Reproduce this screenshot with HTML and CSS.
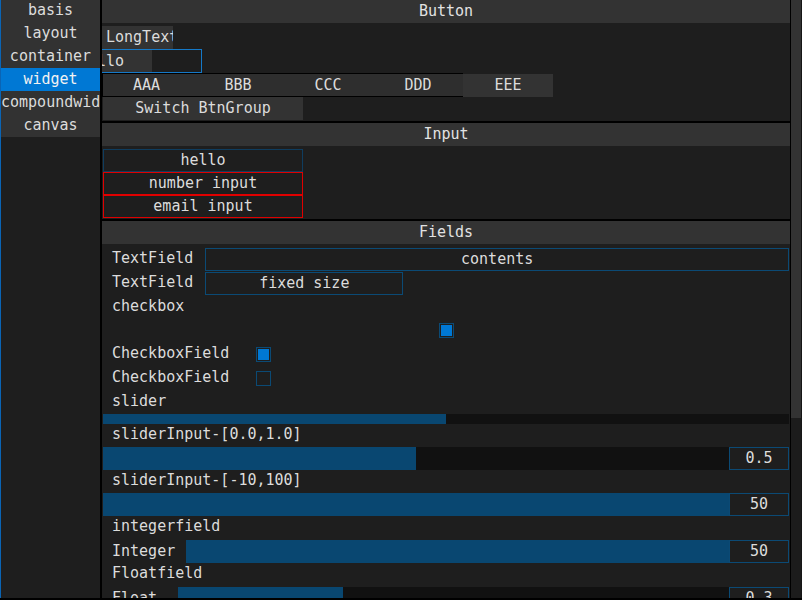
FILE: index.html
```html
<!DOCTYPE html>
<html>
<head>
<meta charset="utf-8">
<link rel="stylesheet" href="styles.css">
</head>
<body>
<div class="app">
  <div class="edge"></div>
  <nav class="sidebar">
    <div class="nav-item">basis</div>
    <div class="nav-item">layout</div>
    <div class="nav-item">container</div>
    <div class="nav-item active">widget</div>
    <div class="nav-item">compoundwidget</div>
    <div class="nav-item">canvas</div>
  </nav>
  <div class="divider"></div>
  <main class="main">
    <section class="section">
      <div class="sec-head">Button</div>
      <div class="sec-body">
        <div class="btn long">LongText</div>
        <div class="scroll-input"><div class="sel">hello</div></div>
        <div class="btn-group">
          <div class="gbtn first">AAA</div>
          <div class="gbtn">BBB</div>
          <div class="gbtn">CCC</div>
          <div class="gbtn">DDD</div>
          <div class="gbtn plain">EEE</div>
        </div>
        <div class="btn switch">Switch BtnGroup</div>
      </div>
    </section>
    <section class="section">
      <div class="sec-head">Input</div>
      <div class="sec-body">
        <div class="inp ok">hello</div>
        <div class="inp err">number input</div>
        <div class="inp err">email input</div>
      </div>
    </section>
    <section class="section grow">
      <div class="sec-head">Fields</div>
      <div class="fields">
        <div class="row h24">
          <span class="label">TextField</span>
          <div class="tfield wide">contents</div>
        </div>
        <div class="row h24">
          <span class="label">TextField</span>
          <div class="tfield fixed">fixed size</div>
        </div>
        <div class="row"><span class="label">checkbox</span></div>
        <div class="row h24 center">
          <div class="cbox on"><div class="mark"></div></div>
        </div>
        <div class="row h24">
          <span class="label">CheckboxField</span>
          <div class="cbox on field"><div class="mark"></div></div>
        </div>
        <div class="row h24">
          <span class="label">CheckboxField</span>
          <div class="cbox field"></div>
        </div>
        <div class="row"><span class="label">slider</span></div>
        <div class="slider-row">
          <div class="track"><div class="fill" style="width:50%"></div></div>
        </div>
        <div class="row"><span class="label">sliderInput-[0.0,1.0]</span></div>
        <div class="srow">
          <div class="track"><div class="fill" style="width:50%"></div></div>
          <div class="numbox">0.5</div>
        </div>
        <div class="row"><span class="label">sliderInput-[-10,100]</span></div>
        <div class="srow">
          <div class="track"><div class="fill" style="width:100%"></div></div>
          <div class="numbox">50</div>
        </div>
        <div class="row h24"><span class="label">integerfield</span></div>
        <div class="srow labeled">
          <span class="label">Integer</span>
          <div class="track int"><div class="fill" style="width:100%"></div></div>
          <div class="numbox">50</div>
        </div>
        <div class="row h24"><span class="label">Floatfield</span></div>
        <div class="srow labeled">
          <span class="label">Float</span>
          <div class="track flt"><div class="fill" style="width:30%"></div></div>
          <div class="numbox">0.3</div>
        </div>
      </div>
    </section>
  </main>
  <div class="vsep"></div>
  <div class="scrollbar"><div class="thumb"></div></div>
</div>
</body>
</html>
```
FILE: styles.css
```css
* { box-sizing: border-box; margin: 0; padding: 0; }
html, body {
  width: 802px;
  height: 600px;
  overflow: hidden;
  background: #000;
}
body {
  font-family: "DejaVu Sans Mono", "Liberation Mono", monospace;
  font-size: 15px;
  color: #dcdcdc;
}
.app {
  display: flex;
  height: 598px;
}
.edge { width: 1px; background: #0a64b4; flex-shrink: 0; }
.sidebar {
  width: 99px;
  flex-shrink: 0;
  background: #1e1e1e;
  display: flex;
  flex-direction: column;
  overflow: hidden;
}
.nav-item {
  height: 23px;
  line-height: 23px;
  background: #323232;
  text-align: center;
  white-space: nowrap;
  overflow: hidden;
  flex-shrink: 0;
}
.nav-item:first-child { margin-top: -1px; }
.nav-item.active { background: #0078d4; color: #f2f2f2; }
.divider { width: 2px; background: #000; flex-shrink: 0; }
.main {
  width: 688px;
  flex-shrink: 0;
  display: flex;
  flex-direction: column;
  gap: 2px;
  overflow: hidden;
  background: #000;
}
.section { background: #1e1e1e; flex-shrink: 0; }
.section.grow { flex: 1; }
.sec-head {
  height: 23px;
  line-height: 23px;
  background: #333;
  text-align: center;
  color: #e2e2e2;
}
.sec-body {
  padding: 3px 0 1px;
  display: flex;
  flex-direction: column;
  align-items: flex-start;
}
.btn {
  height: 23px;
  line-height: 23px;
  background: #333;
  white-space: nowrap;
  overflow: hidden;
}
.btn.long { width: 71px; padding-left: 4px; }
.btn.switch { margin-left: 1px; width: 200px; text-align: center; }
.scroll-input {
  width: 100px;
  height: 24px;
  border: 1px solid #1579c8;
  border-left: none;
  background: #1e1e1e;
}
.sel {
  width: 50px;
  height: 22px;
  line-height: 22px;
  background: #333;
  overflow: hidden;
  white-space: nowrap;
  text-indent: -23px;
}
.btn-group { display: flex; height: 24px; }
.gbtn {
  width: 90px;
  height: 24px;
  line-height: 22px;
  border-top: 1px solid #000;
  border-bottom: 1px solid #000;
  background: #2e2e2e;
  text-align: center;
}
.gbtn.first { width: 91px; border-left: 1px solid #000; text-indent: -3px; }
.gbtn.plain {
  border: none;
  margin-top: 1px;
  height: 23px;
  line-height: 23px;
  background: #333;
}
.inp {
  margin-left: 1px;
  width: 200px;
  height: 23px;
  line-height: 21px;
  border: 1px solid;
  text-align: center;
}
.inp.ok { border-color: #0f3d5f; }
.inp.err { border-color: #e00000; }
.fields {
  padding-top: 4px;
  display: flex;
  flex-direction: column;
}
.row {
  display: flex;
  align-items: flex-start;
  height: 23px;
  padding-left: 10px;
  padding-right: 1px;
}
.row.h24 { height: 24px; }
.row.center { justify-content: center; padding: 0; }
.label { line-height: 21px; white-space: nowrap; }
.tfield {
  height: 23px;
  line-height: 21px;
  border: 1px solid #0b4a75;
  text-align: center;
  margin-left: 12px;
}
.tfield.wide { flex: 1; }
.tfield.fixed { width: 198px; }
.cbox {
  width: 15px;
  height: 15px;
  border: 1px solid #0b4a75;
  padding: 1px;
  margin-top: 4px;
}
.cbox.field { margin-left: 27px; }
.mark { width: 100%; height: 100%; background: #0078d4; }
.slider-row {
  height: 10px;
  display: flex;
  padding: 0 1px;
}
.track {
  flex: 1;
  background: #111;
  display: flex;
}
.fill { background: #094771; height: 100%; }
.srow {
  height: 23px;
  display: flex;
  padding: 0 1px;
}
.srow.labeled { padding-left: 10px; }
.srow .label { line-height: 23px; }
.track.int { margin-left: 11px; }
.track.flt { margin-left: 21px; }
.numbox {
  width: 60px;
  height: 23px;
  line-height: 21px;
  border: 1px solid #0b4a75;
  text-align: center;
  background: #1e1e1e;
}
.vsep { width: 1px; background: #000; flex-shrink: 0; }
.scrollbar {
  width: 11px;
  flex-shrink: 0;
  background: #1c1c1c;
  border-right: 1px solid #161616;
}
.thumb { height: 418px; background: #333; }
```
